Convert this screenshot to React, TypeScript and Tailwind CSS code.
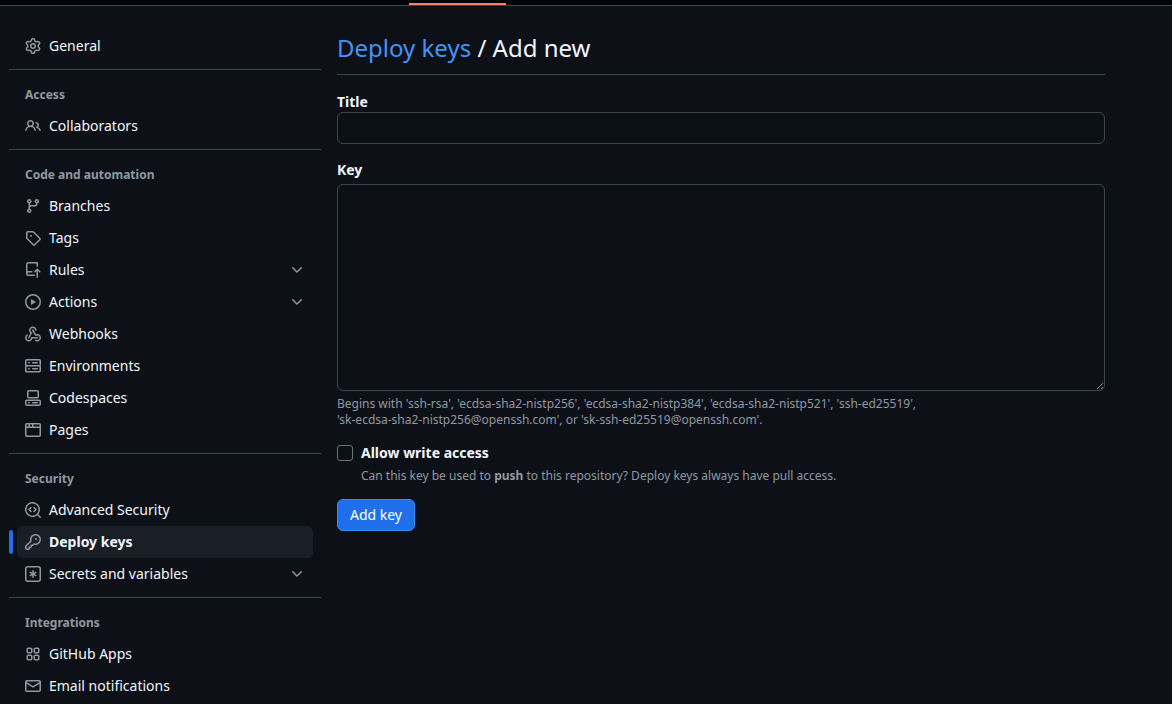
import React from "react";

type IconProps = { size?: number; className?: string };
type Item = { icon: React.ComponentType<IconProps>; label: string; chevron?: boolean; active?: boolean };

const svg = (d: string[]) =>
  function Oct({ size = 16, className }: IconProps) {
    return (
      <svg width={size} height={size} viewBox="0 0 16 16" fill="currentColor" className={className}>
        {d.map((p) => <path key={p} d={p} />)}
      </svg>
    );
  };

const GoGear = svg(["M8 0a8.2 8.2 0 0 1 .701.031C9.444.095 9.99.645 10.16 1.29l.288 1.107c.018.066.079.158.212.224.231.114.454.243.668.386.123.082.233.09.299.071l1.103-.303c.644-.176 1.392.021 1.82.63.27.385.506.792.704 1.218.315.675.111 1.422-.364 1.891l-.814.806c-.049.048-.098.147-.088.294.016.257.016.515 0 .772-.01.147.038.246.088.294l.814.806c.475.469.679 1.216.364 1.891a7.977 7.977 0 0 1-.704 1.217c-.428.61-1.176.807-1.82.63l-1.102-.302c-.067-.019-.177-.011-.3.071a5.909 5.909 0 0 1-.668.386c-.133.066-.194.158-.211.224l-.29 1.106c-.168.646-.715 1.196-1.458 1.26a8.006 8.006 0 0 1-1.402 0c-.743-.064-1.289-.614-1.458-1.26l-.289-1.106c-.018-.066-.079-.158-.212-.224a5.738 5.738 0 0 1-.668-.386c-.123-.082-.233-.09-.299-.071l-1.103.303c-.644.176-1.392-.021-1.82-.63a8.12 8.12 0 0 1-.704-1.218c-.315-.675-.111-1.422.363-1.891l.815-.806c.05-.048.098-.147.088-.294a6.214 6.214 0 0 1 0-.772c.01-.147-.038-.246-.088-.294l-.815-.806C.635 6.045.431 5.298.746 4.623a7.92 7.92 0 0 1 .704-1.217c.428-.61 1.176-.807 1.82-.63l1.102.302c.067.019.177.011.3-.071.214-.143.437-.272.668-.386.133-.066.194-.158.211-.224l.29-1.106C6.009.645 6.556.095 7.299.03 7.53.01 7.764 0 8 0Zm-.571 1.525c-.036.003-.108.036-.137.146l-.289 1.105c-.147.561-.549.967-.998 1.189-.173.086-.34.183-.5.29-.417.278-.97.423-1.529.27l-1.103-.303c-.109-.03-.175.016-.195.045-.22.312-.412.644-.573.99-.014.031-.021.11.059.19l.815.806c.411.406.562.957.53 1.456a4.709 4.709 0 0 0 0 .582c.032.499-.119 1.05-.53 1.456l-.815.806c-.081.08-.073.159-.059.19.162.346.353.677.573.989.02.03.085.076.195.046l1.102-.303c.56-.153 1.113-.008 1.53.27.161.107.328.204.501.29.447.222.85.629.997 1.189l.289 1.105c.029.109.101.143.137.146a6.6 6.6 0 0 0 1.142 0c.036-.003.108-.036.137-.146l.289-1.105c.147-.561.549-.967.998-1.189.173-.086.34-.183.5-.29.417-.278.97-.423 1.529-.27l1.103.303c.109.029.175-.016.195-.045.22-.313.411-.644.573-.99.014-.031.021-.11-.059-.19l-.815-.806c-.411-.406-.562-.957-.53-1.456a4.709 4.709 0 0 0 0-.582c-.032-.499.119-1.05.53-1.456l.815-.806c.081-.08.073-.159.059-.19a6.464 6.464 0 0 0-.573-.989c-.02-.03-.085-.076-.195-.046l-1.102.303c-.56.153-1.113.008-1.53-.27a4.44 4.44 0 0 0-.501-.29c-.447-.222-.85-.629-.997-1.189l-.289-1.105c-.029-.11-.101-.143-.137-.146a6.6 6.6 0 0 0-1.142 0ZM11 8a3 3 0 1 1-6 0 3 3 0 0 1 6 0ZM9.5 8a1.5 1.5 0 1 0-3.001.001A1.5 1.5 0 0 0 9.5 8Z"]);
const GoPeople = svg(["M2 5.5a3.5 3.5 0 1 1 5.898 2.549 5.508 5.508 0 0 1 3.034 4.084.75.75 0 1 1-1.482.235 4 4 0 0 0-7.9 0 .75.75 0 0 1-1.482-.236A5.507 5.507 0 0 1 3.102 8.05 3.493 3.493 0 0 1 2 5.5ZM11 4a3.001 3.001 0 0 1 2.22 5.018 5.01 5.01 0 0 1 2.56 3.012.749.749 0 0 1-.885.954.752.752 0 0 1-.549-.514 3.507 3.507 0 0 0-2.522-2.372.75.75 0 0 1-.574-.73v-.352a.75.75 0 0 1 .416-.672A1.5 1.5 0 0 0 11 5.5.75.75 0 0 1 11 4Zm-5.5-.5a2 2 0 1 0-.001 3.999A2 2 0 0 0 5.5 3.5Z"]);
const GoGitBranch = svg(["M9.5 3.25a2.25 2.25 0 1 1 3 2.122V6A2.5 2.5 0 0 1 10 8.5H6a1 1 0 0 0-1 1v1.128a2.251 2.251 0 1 1-1.5 0V5.372a2.25 2.25 0 1 1 1.5 0v1.836A2.493 2.493 0 0 1 6 7h4a1 1 0 0 0 1-1v-.628A2.25 2.25 0 0 1 9.5 3.25Zm-6 0a.75.75 0 1 0 1.5 0 .75.75 0 0 0-1.5 0Zm8.25-.75a.75.75 0 1 0 0 1.5.75.75 0 0 0 0-1.5ZM4.25 12a.75.75 0 1 0 0 1.5.75.75 0 0 0 0-1.5Z"]);
const GoTag = svg(["M1 7.775V2.75C1 1.784 1.784 1 2.75 1h5.025c.464 0 .91.184 1.238.513l6.25 6.25a1.75 1.75 0 0 1 0 2.474l-5.026 5.026a1.75 1.75 0 0 1-2.474 0l-6.25-6.25A1.752 1.752 0 0 1 1 7.775Zm1.5 0c0 .066.026.13.073.177l6.25 6.25a.25.25 0 0 0 .354 0l5.025-5.025a.25.25 0 0 0 0-.354l-6.25-6.25a.25.25 0 0 0-.177-.073H2.75a.25.25 0 0 0-.25.25ZM6 5a1 1 0 1 1 0 2 1 1 0 0 1 0-2Z"]);
const GoRepoPush = svg(["M1 2.5A2.5 2.5 0 0 1 3.5 0h8.75a.75.75 0 0 1 .75.75v3.5a.75.75 0 0 1-1.5 0V1.5h-8a1 1 0 0 0-1 1v6.708A2.493 2.493 0 0 1 3.5 9h3.25a.75.75 0 0 1 0 1.5H3.5a1 1 0 0 0 0 2h5.75a.75.75 0 0 1 0 1.5H3.5A2.5 2.5 0 0 1 1 11.5Zm13.23 7.79h-.001l-1.224-1.224v6.184a.75.75 0 0 1-1.5 0V9.066L10.28 10.29a.75.75 0 0 1-1.06-1.061l2.505-2.504a.75.75 0 0 1 1.06 0L15.29 9.23a.751.751 0 0 1-.018 1.042.751.751 0 0 1-1.042.018Z"]);
const GoPlay = svg(["M8 0a8 8 0 1 1 0 16A8 8 0 0 1 8 0ZM1.5 8a6.5 6.5 0 1 0 13 0 6.5 6.5 0 0 0-13 0Zm4.879-2.773 4.264 2.559a.25.25 0 0 1 0 .428l-4.264 2.559A.25.25 0 0 1 6 10.559V5.442a.25.25 0 0 1 .379-.215Z"]);
const GoServer = svg(["M1.75 1h12.5c.966 0 1.75.784 1.75 1.75v4c0 .372-.116.717-.314 1 .198.283.314.628.314 1v4a1.75 1.75 0 0 1-1.75 1.75H1.75A1.75 1.75 0 0 1 0 13.75v-4c0-.372.116-.717.314-1a1.739 1.739 0 0 1-.314-1v-4C0 1.784.784 1 1.75 1ZM1.5 2.75v4c0 .138.112.25.25.25h12.5a.25.25 0 0 0 .25-.25v-4a.25.25 0 0 0-.25-.25H1.75a.25.25 0 0 0-.25.25Zm.25 5.75a.25.25 0 0 0-.25.25v4c0 .138.112.25.25.25h12.5a.25.25 0 0 0 .25-.25v-4a.25.25 0 0 0-.25-.25ZM7 4.75A.75.75 0 0 1 7.75 4h4.5a.75.75 0 0 1 0 1.5h-4.5A.75.75 0 0 1 7 4.75ZM7.75 10h4.5a.75.75 0 0 1 0 1.5h-4.5a.75.75 0 0 1 0-1.5ZM3 4.75A.75.75 0 0 1 3.75 4h.5a.75.75 0 0 1 0 1.5h-.5A.75.75 0 0 1 3 4.75ZM3.75 10h.5a.75.75 0 0 1 0 1.5h-.5a.75.75 0 0 1 0-1.5Z"]);
const GoCodespaces = svg([
  "M0 11.25c0-.966.784-1.75 1.75-1.75h12.5c.966 0 1.75.784 1.75 1.75v3A1.75 1.75 0 0 1 14.25 16H1.75A1.75 1.75 0 0 1 0 14.25Zm2-9.5C2 .784 2.784 0 3.75 0h8.5C13.216 0 14 .784 14 1.75v5a1.75 1.75 0 0 1-1.75 1.75h-8.5A1.75 1.75 0 0 1 2 6.75Zm1.75-.25a.25.25 0 0 0-.25.25v5c0 .138.112.25.25.25h8.5a.25.25 0 0 0 .25-.25v-5a.25.25 0 0 0-.25-.25Zm-2 9.5a.25.25 0 0 0-.25.25v3c0 .138.112.25.25.25h12.5a.25.25 0 0 0 .25-.25v-3a.25.25 0 0 0-.25-.25Z",
  "M7 12.75a.75.75 0 0 1 .75-.75h4.5a.75.75 0 0 1 0 1.5h-4.5a.75.75 0 0 1-.75-.75Zm-4 0a.75.75 0 0 1 .75-.75h.5a.75.75 0 0 1 0 1.5h-.5a.75.75 0 0 1-.75-.75Z",
]);
const GoBrowser = svg(["M0 2.75C0 1.784.784 1 1.75 1h12.5c.966 0 1.75.784 1.75 1.75v10.5A1.75 1.75 0 0 1 14.25 15H1.75A1.75 1.75 0 0 1 0 13.25ZM14.5 6h-13v7.25c0 .138.112.25.25.25h12.5a.25.25 0 0 0 .25-.25Zm-6-3.5v2h6V2.75a.25.25 0 0 0-.25-.25ZM5 2.5v2h2v-2Zm-3.25 0a.25.25 0 0 0-.25.25V4.5h2v-2Z"]);
const GoCodescan = svg([
  "M8.47 4.97a.75.75 0 0 0 0 1.06L9.94 7.5 8.47 8.97a.75.75 0 1 0 1.06 1.06l2-2a.75.75 0 0 0 0-1.06l-2-2a.75.75 0 0 0-1.06 0ZM6.53 6.03a.75.75 0 0 0-1.06-1.06l-2 2a.75.75 0 0 0 0 1.06l2 2a.75.75 0 1 0 1.06-1.06L5.06 7.5l1.47-1.47Z",
  "M12.246 13.307a7.501 7.501 0 1 1 1.06-1.06l2.474 2.473a.749.749 0 0 1-.326 1.275.749.749 0 0 1-.734-.215ZM1.5 7.5a6.002 6.002 0 0 0 3.608 5.504 6.002 6.002 0 0 0 6.486-1.117.748.748 0 0 1 .292-.293A6 6 0 1 0 1.5 7.5Z",
]);
const GoKey = svg(["M10.5 0a5.499 5.499 0 1 1-1.288 10.848l-.932.932a.749.749 0 0 1-.53.22H7v.75a.749.749 0 0 1-.22.53l-.5.5a.749.749 0 0 1-.53.22H5v.75a.749.749 0 0 1-.22.53l-.5.5a.749.749 0 0 1-.53.22h-2A1.75 1.75 0 0 1 0 14.25v-2c0-.199.079-.389.22-.53l4.932-4.932A5.5 5.5 0 0 1 10.5 0Zm-4 5.5c-.001.431.069.86.205 1.269a.75.75 0 0 1-.181.768L1.5 12.56v1.69c0 .138.112.25.25.25h1.69l.06-.06v-1.19a.75.75 0 0 1 .75-.75h1.19l.06-.06v-1.19a.75.75 0 0 1 .75-.75h1.19l1.023-1.025a.75.75 0 0 1 .768-.18A4 4 0 1 0 6.5 5.5ZM11 6a1 1 0 1 1 0-2 1 1 0 0 1 0 2Z"]);
const GoMail = svg(["M1.75 2h12.5c.966 0 1.75.784 1.75 1.75v8.5A1.75 1.75 0 0 1 14.25 14H1.75A1.75 1.75 0 0 1 0 12.25v-8.5C0 2.784.784 2 1.75 2ZM1.5 12.251c0 .138.112.25.25.25h12.5a.25.25 0 0 0 .25-.25V5.809L8.38 9.397a.75.75 0 0 1-.76 0L1.5 5.809v6.442Zm13-8.181v-.32a.25.25 0 0 0-.25-.25H1.75a.25.25 0 0 0-.25.25v.32L8 7.88Z"]);
const GoChevronDown = svg(["M12.78 5.22a.749.749 0 0 1 0 1.06l-4.25 4.25a.749.749 0 0 1-1.06 0L3.22 6.28a.749.749 0 1 1 1.06-1.06L8 8.939l3.72-3.719a.749.749 0 0 1 1.06 0Z"]);
const GoWebhook = svg([
  "M5.5 4.25a2.25 2.25 0 0 1 4.5 0 .75.75 0 0 0 1.5 0 3.75 3.75 0 1 0-6.14 2.889l-2.272 4.258a.75.75 0 0 0 1.324.706L7 7.25a.75.75 0 0 0-.309-1.015A2.25 2.25 0 0 1 5.5 4.25Z",
  "M7.364 3.607a.75.75 0 0 1 1.03.257l2.608 4.349a3.75 3.75 0 1 1-.628 6.785.75.75 0 0 1 .752-1.299 2.25 2.25 0 1 0-.033-3.88.75.75 0 0 1-1.03-.256L7.107 4.636a.75.75 0 0 1 .257-1.03Z",
  "M2.9 8.776A.75.75 0 0 1 2.625 9.8 2.25 2.25 0 1 0 6 11.75a.75.75 0 0 1 .75-.751h5.5a.75.75 0 0 1 0 1.5H7.425a3.751 3.751 0 1 1-5.55-3.998.75.75 0 0 1 1.024.274Z",
]);
const GoKeyAsterisk = svg([
  "M0 2.75A2.75 2.75 0 0 1 2.75 0h10.5A2.75 2.75 0 0 1 16 2.75v10.5A2.75 2.75 0 0 1 13.25 16H2.75A2.75 2.75 0 0 1 0 13.25ZM2.75 1.5c-.69 0-1.25.56-1.25 1.25v10.5c0 .69.56 1.25 1.25 1.25h10.5c.69 0 1.25-.56 1.25-1.25V2.75c0-.69-.56-1.25-1.25-1.25Z",
  "M8 4a.75.75 0 0 1 .75.75V6.7l1.69-.975a.75.75 0 0 1 .75 1.3L9.5 8l1.69.976a.75.75 0 0 1-.75 1.298L8.75 9.3v1.951a.75.75 0 0 1-1.5 0V9.299l-1.69.976a.75.75 0 0 1-.75-1.3L6.5 8l-1.69-.975a.75.75 0 0 1 .75-1.3l1.69.976V4.75A.75.75 0 0 1 8 4Z",
]);
const GoApps = svg([
  "M1.5 3.25c0-.966.784-1.75 1.75-1.75h2.5c.966 0 1.75.784 1.75 1.75v2.5A1.75 1.75 0 0 1 5.75 7.5h-2.5A1.75 1.75 0 0 1 1.5 5.75Zm7 0c0-.966.784-1.75 1.75-1.75h2.5c.966 0 1.75.784 1.75 1.75v2.5a1.75 1.75 0 0 1-1.75 1.75h-2.5A1.75 1.75 0 0 1 8.5 5.75Zm-7 7c0-.966.784-1.75 1.75-1.75h2.5c.966 0 1.75.784 1.75 1.75v2.5a1.75 1.75 0 0 1-1.75 1.75h-2.5a1.75 1.75 0 0 1-1.75-1.75Zm7 0c0-.966.784-1.75 1.75-1.75h2.5c.966 0 1.75.784 1.75 1.75v2.5a1.75 1.75 0 0 1-1.75 1.75h-2.5a1.75 1.75 0 0 1-1.75-1.75ZM3.25 3a.25.25 0 0 0-.25.25v2.5c0 .138.112.25.25.25h2.5A.25.25 0 0 0 6 5.75v-2.5A.25.25 0 0 0 5.75 3Zm7 0a.25.25 0 0 0-.25.25v2.5c0 .138.112.25.25.25h2.5a.25.25 0 0 0 .25-.25v-2.5a.25.25 0 0 0-.25-.25Zm-7 7a.25.25 0 0 0-.25.25v2.5c0 .138.112.25.25.25h2.5a.25.25 0 0 0 .25-.25v-2.5a.25.25 0 0 0-.25-.25Zm7 0a.25.25 0 0 0-.25.25v2.5c0 .138.112.25.25.25h2.5a.25.25 0 0 0 .25-.25v-2.5a.25.25 0 0 0-.25-.25Z",
]);

function Row({ icon: Icon, label, chevron, active }: Item) {
  return (
    <div className="relative h-8 pl-2">
      {active && <span className="absolute left-0 top-1 h-6 w-1 rounded-md bg-[#1f6feb]" />}
      <div className={`flex h-8 w-[296px] items-center rounded-md pl-2 pr-2 ${active ? "bg-[#1a1f27]" : ""}`}>
        <Icon size={16} className="mr-2 shrink-0 text-[#9198a1]" />
        <span className={`text-sm leading-5 text-[#f0f6fc] ${active ? "font-bold" : ""}`}>{label}</span>
        {chevron && <GoChevronDown size={16} className="ml-auto text-[#9198a1]" />}
      </div>
    </div>
  );
}

function Group({ title, items }: { title?: string; items: Item[] }) {
  return (
    <div>
      {title && <div className="h-10 pl-4 pt-[16px] text-xs font-bold leading-[18px] text-[#9198a1]">{title}</div>}
      {items.map((i) => <Row key={i.label} {...i} />)}
    </div>
  );
}

const Divider = () => <div className="mt-[7px] h-px bg-[#3d444d]" />;

export default function App() {
  return (
    <div className="h-[704px] overflow-hidden bg-[#0d1117] font-['Noto_Sans',sans-serif] text-[#f0f6fc] scheme-dark">
      <div className="relative h-[6px] border-b border-[#3d444d] bg-[#010409]">
        <span className="absolute left-[409px] top-[3px] h-[2px] w-[97px] bg-[#f78166]" />
      </div>
      <div className="flex pl-[9px] pt-6">
        <aside className="w-[312px] shrink-0">
          <Group items={[{ icon: GoGear, label: "General" }]} />
          <Divider />
          <Group title="Access" items={[{ icon: GoPeople, label: "Collaborators" }]} />
          <Divider />
          <Group
            title="Code and automation"
            items={[
              { icon: GoGitBranch, label: "Branches" },
              { icon: GoTag, label: "Tags" },
              { icon: GoRepoPush, label: "Rules", chevron: true },
              { icon: GoPlay, label: "Actions", chevron: true },
              { icon: GoWebhook, label: "Webhooks" },
              { icon: GoServer, label: "Environments" },
              { icon: GoCodespaces, label: "Codespaces" },
              { icon: GoBrowser, label: "Pages" },
            ]}
          />
          <Divider />
          <Group
            title="Security"
            items={[
              { icon: GoCodescan, label: "Advanced Security" },
              { icon: GoKey, label: "Deploy keys", active: true },
              { icon: GoKeyAsterisk, label: "Secrets and variables", chevron: true },
            ]}
          />
          <Divider />
          <Group
            title="Integrations"
            items={[
              { icon: GoApps, label: "GitHub Apps" },
              { icon: GoMail, label: "Email notifications" },
            ]}
          />
        </aside>
        <main className="ml-4 w-[768px] shrink-0">
          <div className="h-[45px] border-b border-[#3d444d]">
            <h1 className="text-2xl font-normal leading-9">
              <a className="text-[#4493f8]">Deploy keys</a> / Add new
            </h1>
          </div>
          <label className="mt-[15px] block text-sm font-bold leading-6">Title</label>
          <input className="mt-[-2px] block h-8 w-full rounded-md border border-[#3d444d] bg-[#0d1117]" />
          <label className="mt-[14px] block text-sm font-bold leading-6">Key</label>
          <textarea className="mt-[2px] block h-[207px] w-full rounded-md border border-[#3d444d] bg-[#0d1117]" />
          <p className="mt-[5px] text-xs leading-4 text-[#9198a1]">
            Begins with 'ssh-rsa', 'ecdsa-sha2-nistp256', 'ecdsa-sha2-nistp384', 'ecdsa-sha2-nistp521', 'ssh-ed25519',
            <br />
            'sk-ecdsa-sha2-nistp256@openssh.com', or 'sk-ssh-ed25519@openssh.com'.
          </p>
          <div className="mt-[16px] flex">
            <span className="mt-[1px] h-4 w-4 shrink-0 rounded-[3px] border border-[#6b727b]" />
            <div className="ml-2">
              <div className="text-sm font-bold leading-[18px]">Allow write access</div>
              <div className="mt-[5px] text-xs leading-[18px] text-[#9198a1]">
                Can this key be used to <b className="font-bold">push</b> to this repository? Deploy keys always have pull access.
              </div>
            </div>
          </div>
          <button className="mt-[14px] block h-8 w-[78px] rounded-md border border-[#388bfd] bg-[#1f6feb] text-sm font-normal leading-5 text-white">
            Add key
          </button>
        </main>
      </div>
    </div>
  );
}
